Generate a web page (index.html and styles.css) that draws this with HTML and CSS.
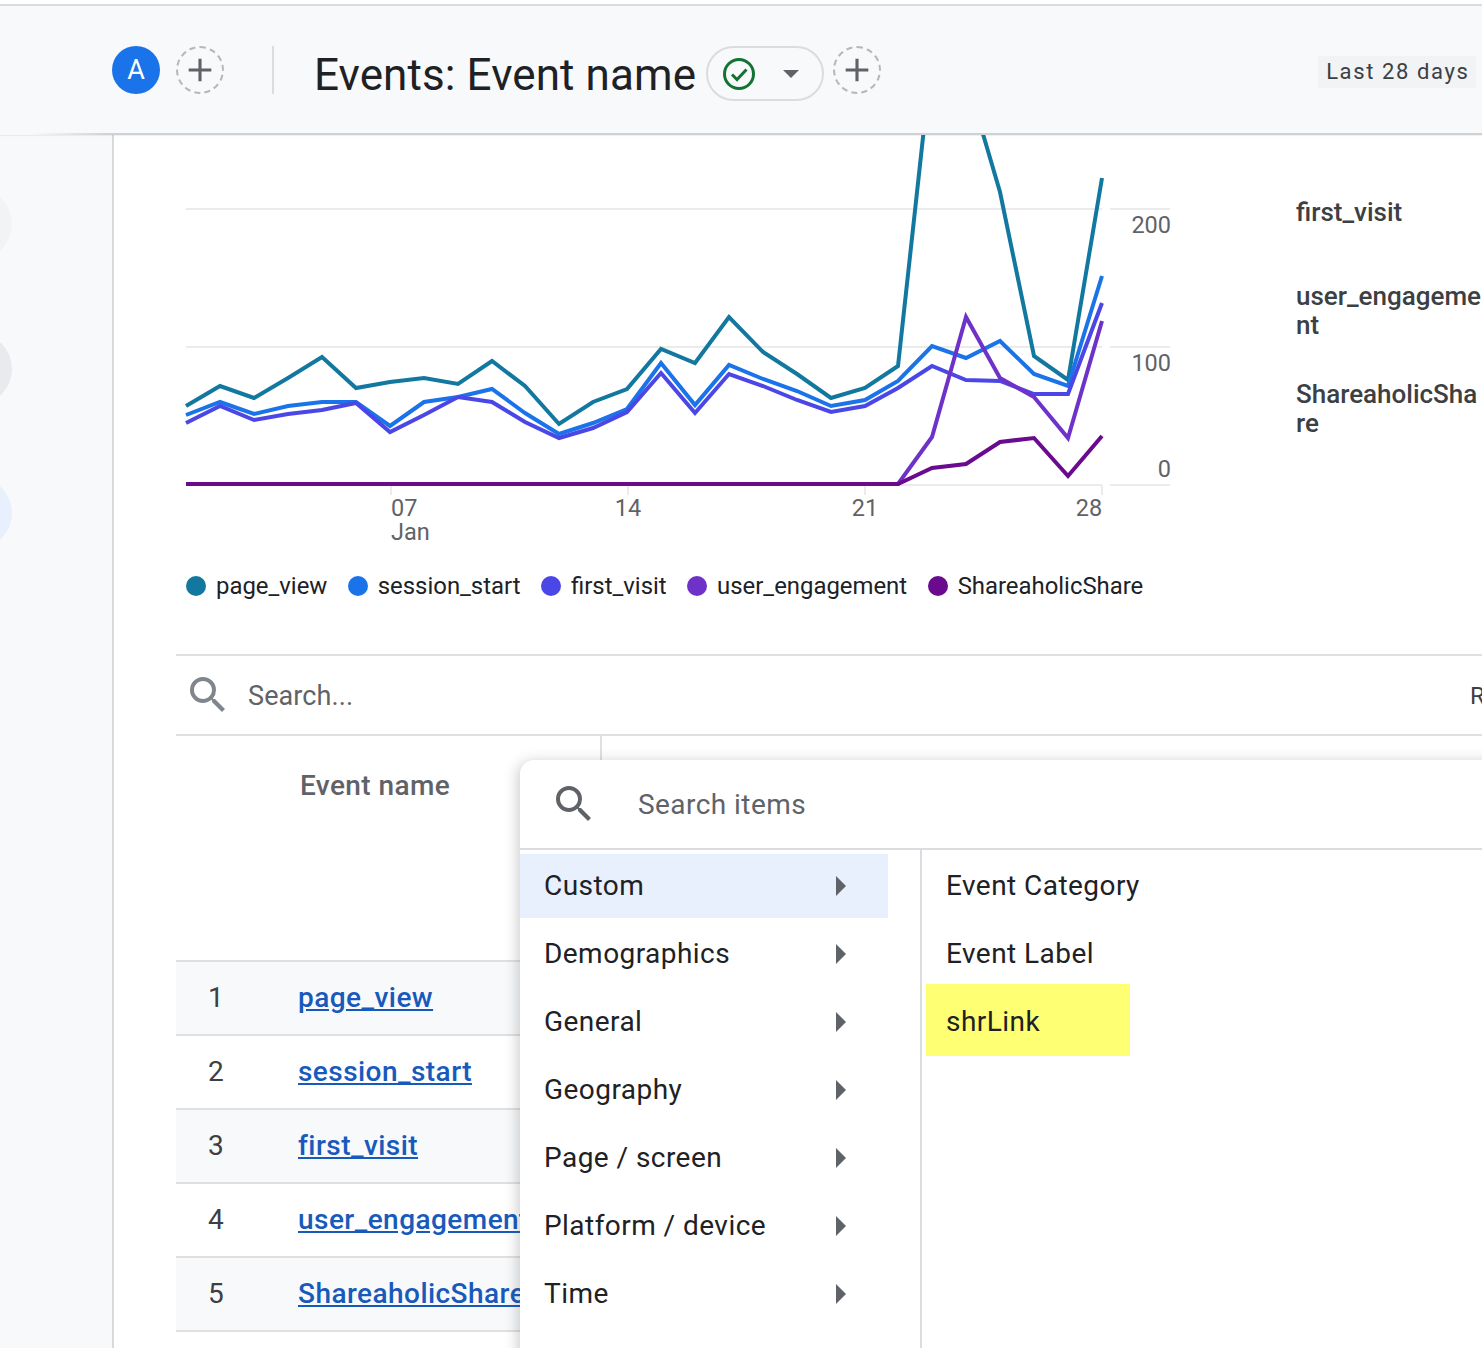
FILE: index.html
```html
<!DOCTYPE html>
<html lang="en">
<head>
<meta charset="utf-8">
<title>Events: Event name</title>
<link rel="stylesheet" href="styles.css">
</head>
<body>
<div class="page">
  <header class="topbar">
    <span class="avatar">A</span>
    <span class="add-circle"><svg viewBox="0 0 24 24" class="plus"><path d="M12 4v16M4 12h16"/></svg></span>
    <span class="divider"></span>
    <h1 class="title">Events: Event name</h1>
    <span class="chip">
      <svg class="check" viewBox="0 0 32 32"><circle cx="16" cy="16" r="14.5"/><path d="M9 16.5l5 5 9.5-10"/></svg>
      <svg class="caret" viewBox="0 0 16 8"><path d="M0 0h16L8 8z"/></svg>
    </span>
    <span class="add-circle"><svg viewBox="0 0 24 24" class="plus"><path d="M12 4v16M4 12h16"/></svg></span>
    <span class="range">Last 28 days</span>
  </header>
  <div class="body-row">
    <aside class="rail">
      <span class="bubble b1"></span>
      <span class="bubble b2"></span>
      <span class="bubble b3"></span>
    </aside>
    <main class="content">
      <div class="chart-row">
        <svg class="chart" viewBox="176 135 1000 425">
          <g class="grid">
            <path d="M186 209H1102M1110 209H1170M186 347H1102M1110 347H1170M186 485H1102M1110 485H1170"/>
            <path d="M391 485V495M628 485V495M865 485V495M1102 485V495"/>
          </g>
          <g class="axis">
            <text x="1171" y="233" text-anchor="end">200</text>
            <text x="1171" y="371" text-anchor="end">100</text>
            <text x="1171" y="477" text-anchor="end">0</text>
            <text x="391" y="516">07</text>
            <text x="391" y="540">Jan</text>
            <text x="628" y="516" text-anchor="middle">14</text>
            <text x="865" y="516" text-anchor="middle">21</text>
            <text x="1089" y="516" text-anchor="middle">28</text>
          </g>
          <g class="lines">
            <polyline class="l1" points="186,406 220,386 254,398 288,378 322,357 356,388 390,382 424,378 458,384 492,361 525,386 559,424 593,402 627,389 661,349 695,363 729,317 763,352 797,374 831,398 865,388 898,366 932,55 966,76 1000,192 1034,356 1068,380 1102,178"/>
            <polyline class="l2" points="186,415 220,402 254,414 288,406 322,402 356,402 390,426 424,402 458,397 492,389 525,413 559,434 593,423 627,409 661,363 695,405 729,365 763,379 797,391 831,406 865,400 898,381 932,346 966,358 1000,341 1034,374 1068,386 1102,276"/>
            <polyline class="l3" points="186,423 220,406 254,420 288,414 322,410 356,403 390,432 424,415 458,397 492,402 525,422 559,438 593,428 627,412 661,373 695,413 729,374 763,386 797,400 831,412 865,406 898,388 932,366 966,380 1000,381 1034,394 1068,394 1102,303"/>
            <polyline class="l4" points="186,484 898,484 932,437 966,317 1000,378 1034,397 1068,438 1102,321"/>
            <polyline class="l5" points="186,484 898,484 932,468 966,464 1000,442 1034,438 1068,476 1102,436"/>
          </g>
        </svg>
        <ul class="side-legend">
          <li>first_visit</li>
          <li>user_engageme<br>nt</li>
          <li>ShareaholicSha<br>re</li>
        </ul>
      </div>
      <ul class="legend">
        <li><span class="dot d1"></span>page_view</li>
        <li><span class="dot d2"></span>session_start</li>
        <li><span class="dot d3"></span>first_visit</li>
        <li><span class="dot d4"></span>user_engagement</li>
        <li><span class="dot d5"></span>ShareaholicShare</li>
      </ul>
      <div class="table-wrap">
        <div class="search-row">
          <svg class="search-icon light" viewBox="0 0 24 24"><path d="M15.5 14h-.79l-.28-.27A6.471 6.471 0 0 0 16 9.5 6.5 6.5 0 1 0 9.5 16c1.61 0 3.09-.59 4.23-1.57l.27.28v.79l5 4.99L20.49 19l-4.99-5zm-6 0C7.01 14 5 11.99 5 9.5S7.01 5 9.5 5 14 7.01 14 9.5 11.99 14 9.5 14z"/></svg>
          <span class="search-text">Search...</span>
          <span class="rows-label">Rows per page</span>
        </div>
        <div class="thead">
          <span class="th">Event name</span>
        </div>
        <div class="tr odd"><span class="num">1</span><a class="ev" href="#">page_view</a></div>
        <div class="tr"><span class="num">2</span><a class="ev" href="#">session_start</a></div>
        <div class="tr odd"><span class="num">3</span><a class="ev" href="#">first_visit</a></div>
        <div class="tr"><span class="num">4</span><a class="ev" href="#">user_engagement</a></div>
        <div class="tr odd"><span class="num">5</span><a class="ev" href="#">ShareaholicShare</a></div>
      </div>
    </main>
  </div>
  <section class="popup">
    <div class="popup-search">
      <svg class="search-icon" viewBox="0 0 24 24"><path d="M15.5 14h-.79l-.28-.27A6.471 6.471 0 0 0 16 9.5 6.5 6.5 0 1 0 9.5 16c1.61 0 3.09-.59 4.23-1.57l.27.28v.79l5 4.99L20.49 19l-4.99-5zm-6 0C7.01 14 5 11.99 5 9.5S7.01 5 9.5 5 14 7.01 14 9.5 11.99 14 9.5 14z"/></svg>
      <span class="popup-placeholder">Search items</span>
    </div>
    <div class="popup-cols">
      <ul class="cats">
        <li class="cat active">Custom<svg class="arrow" viewBox="0 0 10 20"><path d="M0 0l10 10L0 20z"/></svg></li>
        <li class="cat">Demographics<svg class="arrow" viewBox="0 0 10 20"><path d="M0 0l10 10L0 20z"/></svg></li>
        <li class="cat">General<svg class="arrow" viewBox="0 0 10 20"><path d="M0 0l10 10L0 20z"/></svg></li>
        <li class="cat">Geography<svg class="arrow" viewBox="0 0 10 20"><path d="M0 0l10 10L0 20z"/></svg></li>
        <li class="cat">Page / screen<svg class="arrow" viewBox="0 0 10 20"><path d="M0 0l10 10L0 20z"/></svg></li>
        <li class="cat">Platform / device<svg class="arrow" viewBox="0 0 10 20"><path d="M0 0l10 10L0 20z"/></svg></li>
        <li class="cat">Time<svg class="arrow" viewBox="0 0 10 20"><path d="M0 0l10 10L0 20z"/></svg></li>
      </ul>
      <ul class="items">
        <li class="item">Event Category</li>
        <li class="item">Event Label</li>
        <li class="item marked">shrLink</li>
      </ul>
    </div>
  </section>
</div>
</body>
</html>
```
FILE: styles.css
```css
* { box-sizing: border-box; }
html, body { margin: 0; padding: 0; height: 100%; }
body { font-family: Roboto, "Liberation Sans", sans-serif; background: #fff; color: #202124; overflow: hidden; }
ul { list-style: none; margin: 0; padding: 0; }
.page { position: relative; width: 1482px; height: 1348px; overflow: hidden; padding-top: 4px; background: #fff; }

.topbar { position: relative; z-index: 2; height: 131px; display: flex; align-items: flex-start; padding: 40px 0 0 112px; background: #f8f9fa; border-top: 2px solid #dadce0; }
.topbar::after { content: ""; position: absolute; left: 0; right: 0; bottom: 0; height: 2px; background: linear-gradient(90deg, rgba(200,202,206,0) 30px, #cfd1d5 110px); box-shadow: 0 1px 1px rgba(60,64,67,.08); }
.avatar { width: 48px; height: 48px; border-radius: 50%; background: #1a73e8; color: #fff; font-size: 27px; display: flex; align-items: center; justify-content: center; flex: none; }
.add-circle { width: 48px; height: 48px; border-radius: 50%; border: 2px dashed #b4b7bb; display: flex; align-items: center; justify-content: center; flex: none; margin-left: 16px; }
.plus { width: 34px; height: 34px; }
.plus path { stroke: #5f6368; stroke-width: 2.2; fill: none; }
.divider { width: 2px; height: 48px; background: #dadce0; margin: 0 40px 0 48px; flex: none; }
.title { margin: 1px 10px 0 0; font-size: 44px; font-weight: 400; line-height: 56px; letter-spacing: 0.1px; white-space: nowrap; color: #202124; }
.chip { width: 118px; height: 55px; border: 2px solid #dadce0; border-radius: 28px; display: flex; align-items: center; padding-left: 15px; flex: none; }
.check { width: 32px; height: 32px; }
.check circle, .check path { fill: none; stroke: #137333; stroke-width: 3; }
.caret { width: 16px; height: 8px; margin-left: 28px; }
.caret path { fill: #5f6368; }
.chip + .add-circle { margin-left: 9px; }
.range { margin-left: 437px; margin-top: 10px; height: 32px; width: 158px; background: #f1f3f4; color: #3c4043; font-size: 22px; line-height: 32px; letter-spacing: 1.6px; padding-left: 8px; white-space: nowrap; flex: none; }

.body-row { display: flex; height: 1213px; }
.rail { width: 114px; flex: none; border-right: 2px solid #d8d9db; padding-top: 53px; display: flex; flex-direction: column; gap: 72.5px; background: #f8f9fa; overflow: hidden; }
.bubble { width: 72px; height: 72px; border-radius: 50%; margin-left: -60px; flex: none; }
.b1 { background: #f1f3f4; }
.b2 { background: #e8eaed; }
.b3 { background: #e8f0fe; }

.content { flex: 1; min-width: 0; background: #fff; padding-left: 62px; overflow: hidden; }
.chart-row { display: flex; height: 425px; }
.chart { width: 1000px; height: 425px; flex: none; display: block; }
.grid path { stroke: #ebebeb; stroke-width: 2; fill: none; }
.axis text { font-family: Roboto, sans-serif; font-size: 23.5px; fill: #5f6368; }
.lines polyline { fill: none; stroke-width: 4; stroke-linejoin: miter; }
.l1 { stroke: #12789f; }
.l2 { stroke: #1a73e8; }
.l3 { stroke: #4b47e6; }
.l4 { stroke: #6e32c8; }
.l5 { stroke: #6a0a8e; }

.side-legend { margin-left: 120px; padding-top: 63px; width: 186px; flex: none; font-size: 26px; font-weight: 500; line-height: 29px; color: #3c4043; white-space: nowrap; }
.side-legend li { min-height: 84px; padding-bottom: 40px; }

.legend { display: flex; gap: 20.5px; padding-left: 10px; height: 52px; align-items: center; font-size: 23.9px; color: #202124; }
.legend li { display: flex; align-items: center; gap: 10px; white-space: nowrap; }
.dot { width: 20px; height: 20px; border-radius: 50%; flex: none; }
.d1 { background: #12789f; }
.d2 { background: #1a73e8; }
.d3 { background: #4b47e6; }
.d4 { background: #6e32c8; }
.d5 { background: #6a0a8e; }

.table-wrap { margin-top: 42px; }
.search-row { height: 82px; border-top: 2px solid #e0e0e0; border-bottom: 2px solid #e0e0e0; display: flex; align-items: center; padding-left: 8px; white-space: nowrap; }
.search-icon { width: 48px; height: 48px; flex: none; }
.search-icon path { fill: #5f6368; }
.search-icon.light path { fill: #80868b; }
.search-text { font-size: 27px; line-height: 34px; padding-top: 2px; color: #5f6368; margin-left: 16px; width: 1222px; flex: none; letter-spacing: 0.1px; }
.rows-label { font-size: 24px; line-height: 34px; padding-top: 2px; color: #3c4043; }
.thead { height: 226px; position: relative; padding: 33px 0 0 124px; border-bottom: 2px solid #e0e0e0; }
.thead::after { content: ""; position: absolute; left: 424px; top: 0; height: 30px; width: 2px; background: #e0e0e0; }
.th { font-size: 28px; line-height: 34px; font-weight: 500; letter-spacing: 0.4px; color: #5f6368; display: block; }
.tr { height: 74px; display: flex; align-items: center; padding-bottom: 2px; border-bottom: 2px solid #e0e0e0; font-size: 28px; }
.tr.odd { background: #f8f9fa; }
.num { width: 122px; padding-left: 32px; color: #3c4043; flex: none; }
.ev { color: #185abc; font-weight: 500; letter-spacing: 0.45px; white-space: nowrap; text-decoration: underline; }

.popup { position: absolute; z-index: 3; left: 520px; top: 760px; width: 1100px; height: 700px; background: #fff; border-radius: 14px 0 0 0; box-shadow: -2px 2px 14px rgba(60,64,67,.28); }
.popup-search { height: 90px; border-bottom: 2px solid #dadce0; display: flex; align-items: center; padding-left: 30px; }
.popup-placeholder { margin-left: 40px; font-size: 28px; letter-spacing: 0.45px; color: #5f6368; }
.popup-cols { display: flex; height: 610px; }
.cats { width: 402px; border-right: 2px solid #dadce0; padding-top: 4px; flex: none; }
.cat { width: 368px; height: 64px; margin-bottom: 4px; padding: 0 42px 2px 24px; display: flex; align-items: center; justify-content: space-between; font-size: 28px; letter-spacing: 0.45px; color: #202124; }
.cat.active { background: #e8f0fe; }
.arrow { width: 10px; height: 20px; flex: none; margin-top: 2px; }
.arrow path { fill: #5f6368; }
.items { padding: 4px 0 0 4px; }
.item { height: 64px; margin-bottom: 4px; padding: 0 0 2px 20px; display: flex; align-items: center; font-size: 28px; letter-spacing: 0.45px; color: #202124; }
.item.marked { width: 204px; height: 72px; margin-top: -6px; padding: 2px 0 0 20px; background: #ffff73; }
```
